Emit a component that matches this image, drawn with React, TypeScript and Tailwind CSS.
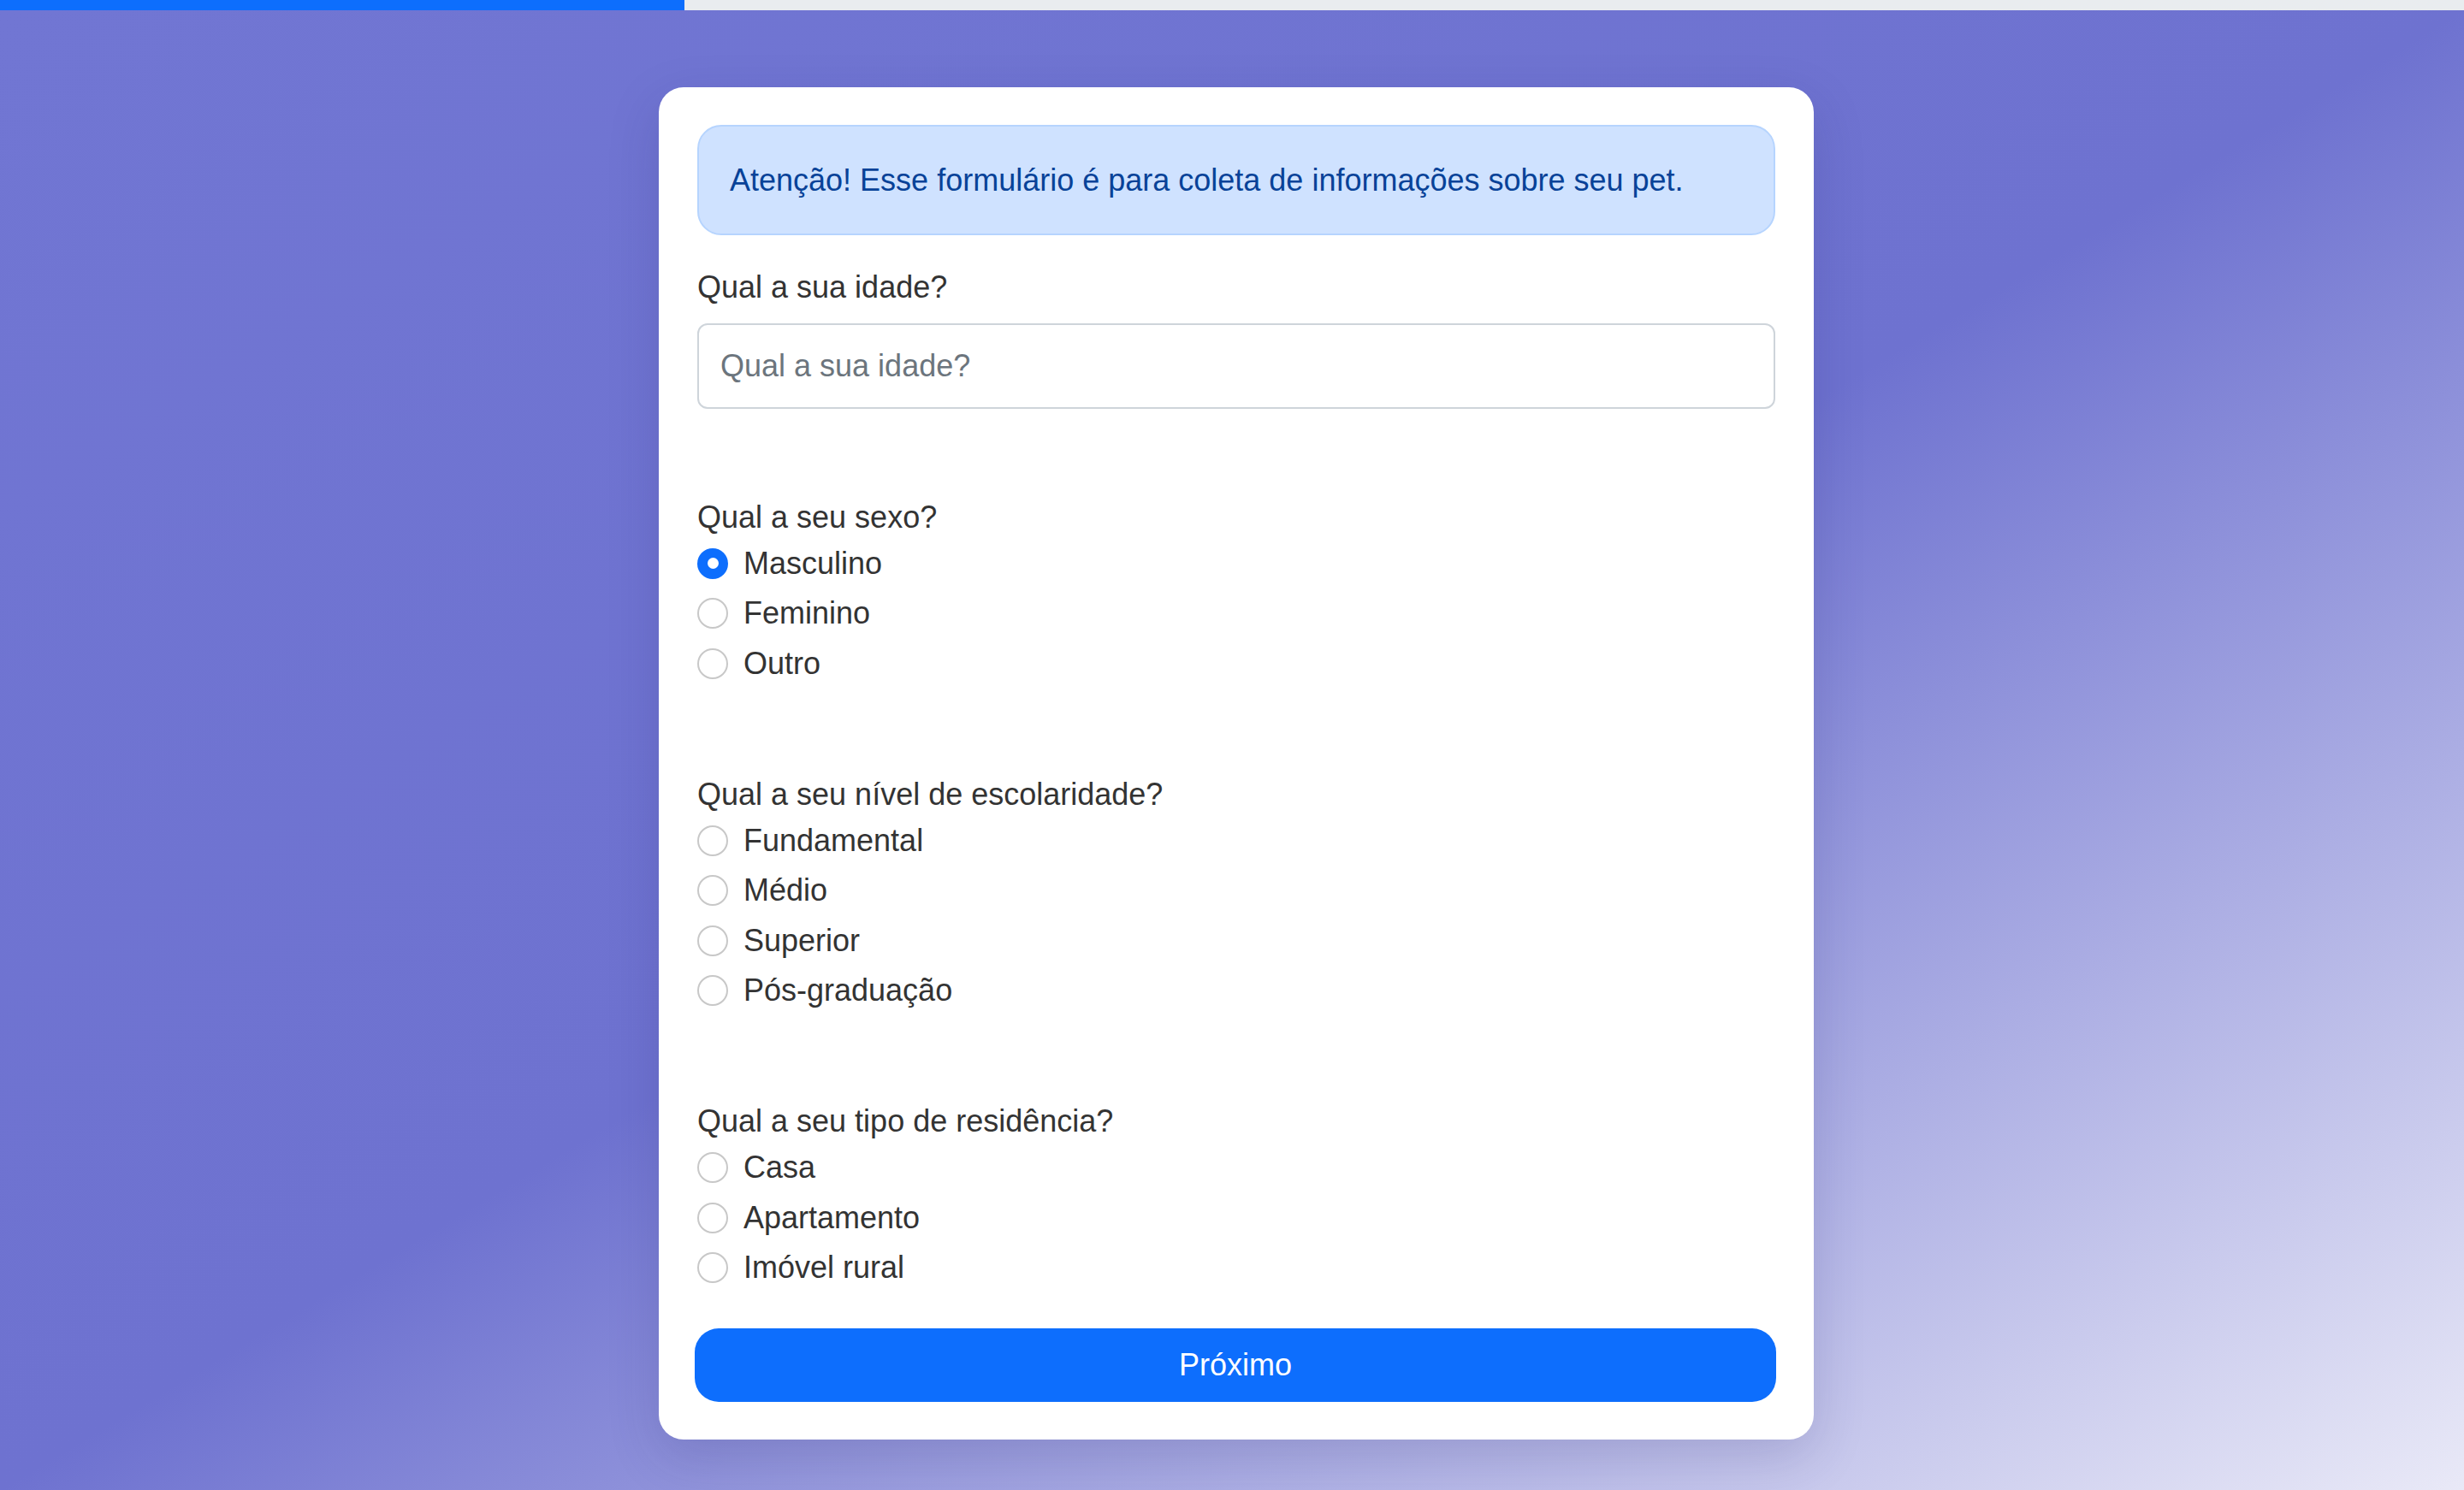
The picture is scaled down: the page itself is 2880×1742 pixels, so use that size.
import React from "react";

type Opt = { label: string; checked?: boolean };

function Radio({ label, checked }: Opt) {
  return (
    <label className="flex h-[54px] items-center mb-[4.5px] cursor-pointer">
      {checked ? (
        <span className="flex h-[36px] w-[36px] shrink-0 items-center justify-center rounded-full bg-[#0d6efd]">
          <span className="h-[13px] w-[13px] rounded-full bg-white" />
        </span>
      ) : (
        <span className="h-[36px] w-[36px] shrink-0 rounded-full border-[2px] border-[#c8c8c8] bg-white" />
      )}
      <span className="ml-[18px] text-[36px] leading-[54px] text-[#333333]">{label}</span>
    </label>
  );
}

function Question({ title, options, className }: { title: string; options: Opt[]; className: string }) {
  return (
    <div className={className}>
      <div className="text-[36px] leading-[54px] text-[#333333]">{title}</div>
      {options.map((o) => (
        <Radio key={o.label} {...o} />
      ))}
    </div>
  );
}

export default function App() {
  return (
    <div className="flex min-h-[1742px] w-full flex-col font-['Liberation_Sans',Arial,sans-serif]">
      <div className="flex h-[12px] w-full bg-[#e9ecef]">
        <div className="h-full w-[800px] bg-[#0d6efd]" />
      </div>
      <div className="flex flex-1 justify-center bg-[linear-gradient(to_bottom_right,#7176d3_0%,#6e72d0_50%,#e9e9f7_100%)] pl-[10px] pt-[90px]">
        <div className="h-fit w-[1350px] rounded-[29px] bg-white px-[45px] pb-[44px] pt-[44px] shadow-[0_20px_60px_rgba(40,40,110,0.18)]">
          <div className="flex h-[129px] items-center rounded-[28px] border-[2px] border-[#b6d4fe] bg-[#cfe2ff] px-[36px] text-[36px] text-[#084298]">
            Atenção! Esse formulário é para coleta de informações sobre seu pet.
          </div>

          <div className="mt-[34px] text-[36px] leading-[54px] text-[#333333]">Qual a sua idade?</div>
          <input
            type="text"
            placeholder="Qual a sua idade?"
            className="mt-[15px] block h-[100px] w-full rounded-[12px] border-[2px] border-[#ced4da] bg-white px-[25px] text-[36px] text-[#333333] outline-none placeholder:text-[#6c757d]"
          />

          <Question
            className="mt-[99.5px]"
            title="Qual a seu sexo?"
            options={[{ label: "Masculino", checked: true }, { label: "Feminino" }, { label: "Outro" }]}
          />
          <Question
            className="mt-[99px]"
            title="Qual a seu nível de escolaridade?"
            options={[{ label: "Fundamental" }, { label: "Médio" }, { label: "Superior" }, { label: "Pós-graduação" }]}
          />
          <Question
            className="mt-[99px]"
            title="Qual a seu tipo de residência?"
            options={[{ label: "Casa" }, { label: "Apartamento" }, { label: "Imóvel rural" }]}
          />

          <button
            type="button"
            className="mt-[44px] ml-[-3px] flex h-[86px] w-[1264px] items-center justify-center rounded-[28px] bg-[#0d6efd] text-[36px] font-medium text-white"
          >
            Próximo
          </button>
        </div>
      </div>
    </div>
  );
}
